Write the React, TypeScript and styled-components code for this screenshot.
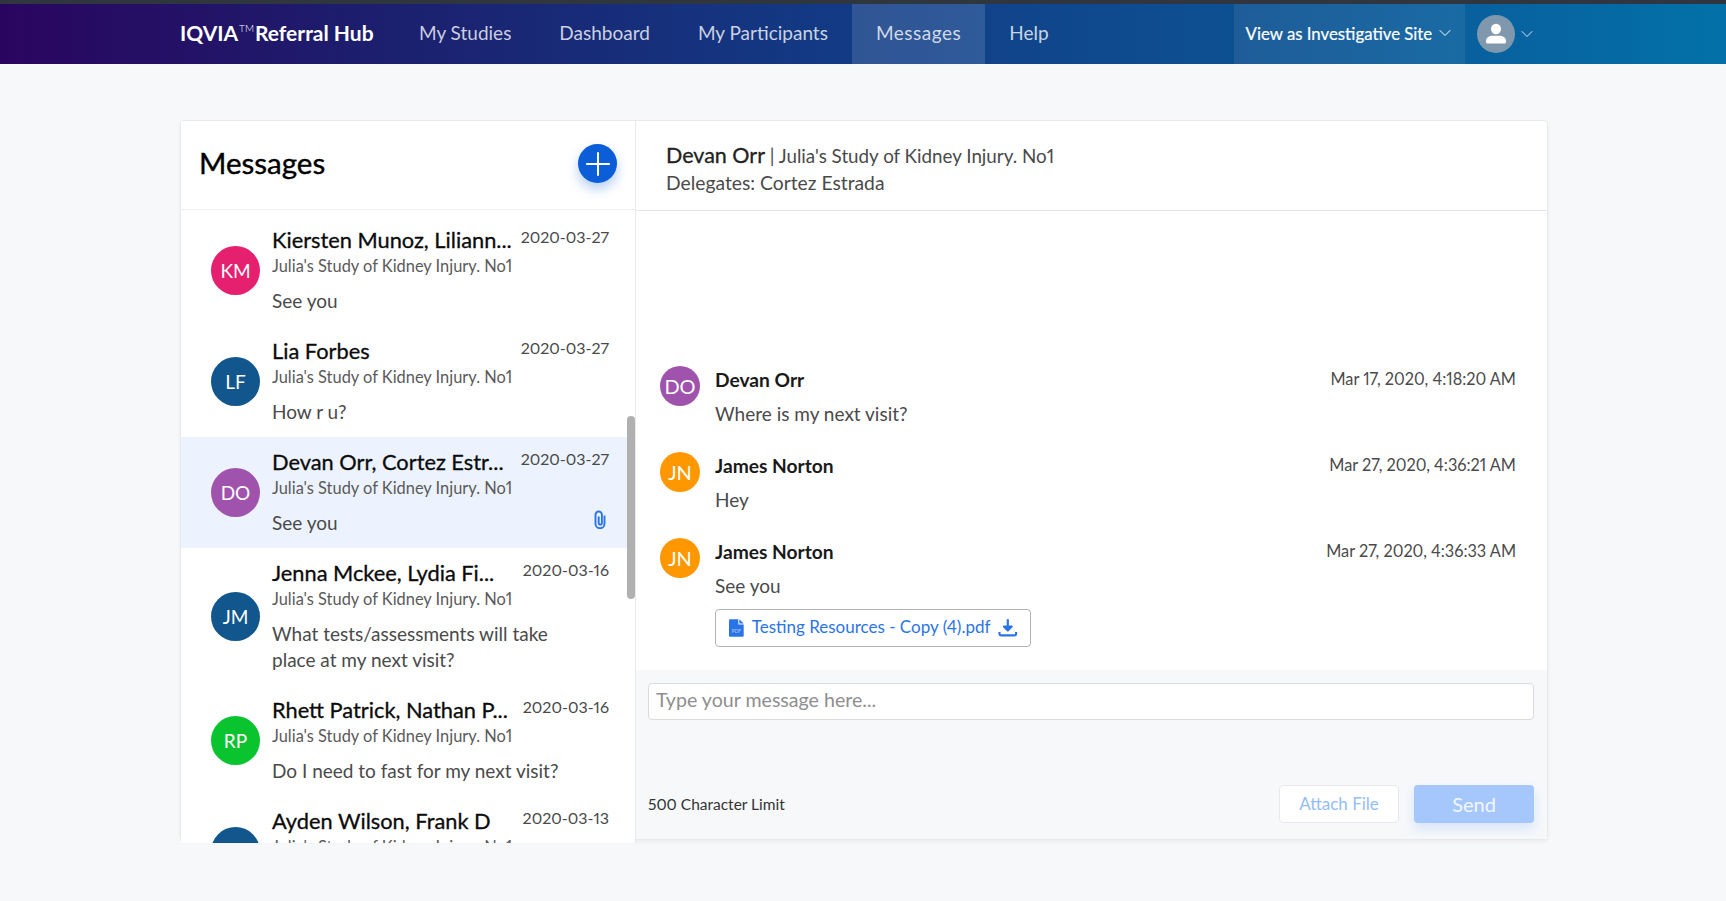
import React from 'react'
import styled, { createGlobalStyle } from 'styled-components'
import { ChevronDown, Plus } from 'lucide-react'

const Global = createGlobalStyle`
	html, body {
		margin: 0;
		height: 901px;
		overflow: hidden;
		background: #f7f8fa;
		font-family: 'Lato', 'Liberation Sans', sans-serif;
		font-variant-numeric: proportional-nums;
		color: #4a4a4a;
	}
	* { box-sizing: border-box; }
`

const TopStrip = styled.div`
	height: 4px;
	background: #2f3640;
`

const Header = styled.header`
	display: flex;
	align-items: stretch;
	height: 60px;
	padding-left: 180px;
	background: linear-gradient(90deg, #2a0560 0%, #1c1f6e 22%, #123c86 50%, #0d5192 72%, #0371a9 100%);
`

const Brand = styled.div`
	display: flex;
	align-items: center;
	width: 215px;
	padding-bottom: 3px;
	color: #fff;
	font-size: 21px;
	font-weight: 700;
	white-space: nowrap;

	sup {
		font-size: 10px;
		font-weight: 300;
		margin: -9px 1px 0 1px;
		line-height: 1;
	}
`

const NavItem = styled.a<{ $active?: boolean }>`
	display: flex;
	align-items: center;
	padding: 0 24px 4px;
	color: rgba(255, 255, 255, 0.78);
	font-size: 19px;
	letter-spacing: ${p => (p.$active ? '0.5px' : '0')};
	background: ${p => (p.$active ? 'rgba(255,255,255,0.13)' : 'transparent')};
`

const ViewAs = styled.div`
	display: flex;
	align-items: center;
	gap: 3px;
	margin-left: 161px;
	width: 231px;
	padding: 0 0 2px 12px;
	color: #fff;
	font-size: 16.8px;
	white-space: nowrap;
	background: rgba(255, 255, 255, 0.07);
	-webkit-text-stroke: 0.2px currentColor;
`

const UserBox = styled.div`
	display: flex;
	align-items: center;
	gap: 2px;
	padding-left: 12px;
	color: rgba(255, 255, 255, 0.85);
`

const UserPic = styled.div`
	display: flex;
	align-items: center;
	justify-content: center;
	width: 38px;
	height: 38px;
	border-radius: 50%;
	background: #8098ae;
`

const Card = styled.main`
	display: flex;
	align-items: flex-start;
	width: 1368px;
	height: 720px;
	margin: 56px 0 0 180px;
	background: #fff;
	border: 1px solid #e8e9ec;
	border-radius: 4px;
	box-shadow: 0 2px 4px rgba(0, 0, 0, 0.05);
`

const Left = styled.section`
	position: relative;
	display: flex;
	flex-direction: column;
	flex: 0 0 455px;
	height: 722px;
	background: #fff;
	border-right: 1px solid #e8e9ec;
	overflow: hidden;
`

const LeftHead = styled.div`
	display: flex;
	align-items: center;
	justify-content: space-between;
	flex: 0 0 auto;
	height: 89px;
	padding: 0 18px 3px 18px;
	border-bottom: 1px solid #eceef0;
`

const Title = styled.h1`
	margin: 0 0 2px;
	color: #000;
	font-size: 29.5px;
	font-weight: 400;
	-webkit-text-stroke: 0.4px currentColor;
`

const AddButton = styled.div`
	display: flex;
	align-items: center;
	justify-content: center;
	width: 39px;
	height: 39px;
	border-radius: 50%;
	color: #fff;
	background: #0b5ed7;
	box-shadow: 0 6px 12px rgba(11, 94, 215, 0.3);
`

const List = styled.div`
	flex: 1;
	padding-top: 5px;
	overflow: hidden;
`

const ScrollThumb = styled.div`
	position: absolute;
	top: 295px;
	right: 0;
	width: 8px;
	height: 183px;
	border-radius: 4px;
	background: #b0b0b0;
`

const Item = styled.div<{ $active?: boolean }>`
	display: flex;
	align-items: center;
	gap: 12px;
	padding: 0 26px 0 30px;
	background: ${p => (p.$active ? '#ecf3fe' : 'transparent')};
`

const Avatar = styled.div<{ $bg: string; $size?: number }>`
	display: flex;
	align-items: center;
	justify-content: center;
	flex: 0 0 auto;
	width: ${p => p.$size ?? 49}px;
	height: ${p => p.$size ?? 49}px;
	border-radius: 50%;
	color: #fff;
	font-size: ${p => (p.$size ? 20 : 19)}px;
	background: ${p => p.$bg};
`

const ItemBody = styled.div`
	flex: 1;
	min-width: 0;
	padding: 11px 0 12px;
`

const ItemTop = styled.div`
	display: flex;
	justify-content: space-between;
	align-items: flex-start;
	height: 28px;
`

const Name = styled.div`
	color: #0b0b0b;
	font-size: 21.8px;
	line-height: 28px;
	white-space: nowrap;
	-webkit-text-stroke: 0.3px currentColor;
`

const ItemDate = styled.div`
	margin-top: -1px;
	color: #4a4a4a;
	font-size: 16px;
	line-height: 24px;
	white-space: nowrap;
`

const Study = styled.div`
	margin-top: 1px;
	color: #5a5a5a;
	font-size: 16.4px;
	line-height: 22px;
`

const ItemFoot = styled.div`
	display: flex;
	justify-content: space-between;
	align-items: flex-start;
	min-height: 26px;
	margin-top: 11px;
	padding-right: 3px;
	color: #4a4a4a;
	font-size: 19px;
	line-height: 26px;

	span {
		max-width: 300px;
	}
`

const Right = styled.section`
	display: flex;
	flex-direction: column;
	flex: 1;
	align-self: stretch;
	min-width: 0;
`

const RightHead = styled.div`
	height: 90px;
	padding: 21px 30px 0;
	border-bottom: 1px solid #e5e6e8;
`

const HeadLine = styled.div`
	color: #4a4a4a;
	font-size: 18.8px;
	line-height: 27px;

	strong {
		color: #222;
		font-size: 21.5px;
		font-weight: 400;
		-webkit-text-stroke: 0.3px currentColor;
	}
`

const Delegates = styled(HeadLine)`
	font-size: 19.3px;
`

const Thread = styled.div`
	flex: 1;
	display: flex;
	flex-direction: column;
	justify-content: flex-end;
	padding: 0 31px 23px 24px;
`

const Row = styled.div`
	display: flex;
	gap: 15px;
	padding-bottom: 22px;

	&:last-child {
		padding-bottom: 0;
	}
`

const RowBody = styled.div`
	flex: 1;
	min-width: 0;
`

const RowTop = styled.div`
	display: flex;
	justify-content: space-between;
	align-items: flex-start;
	height: 32px;
`

const Sender = styled.div`
	color: #1a1a1a;
	font-size: 19.2px;
	font-weight: 700;
	line-height: 27px;
`

const Stamp = styled.div`
	color: #4a4a4a;
	font-size: 16.3px;
	line-height: 25px;
`

const Text = styled.div`
	color: #4a4a4a;
	font-size: 19px;
	line-height: 32px;
`

const FileChip = styled.div`
	display: flex;
	align-items: center;
	gap: 8px;
	width: 316px;
	height: 38px;
	margin-top: 7px;
	padding: 0 12px 0 13px;
	color: #2b74e8;
	font-size: 17px;
	border: 1px solid #b0b2b5;
	border-radius: 4px;
	white-space: nowrap;

	span {
		flex: 1;
		padding-bottom: 3px;
	}
`

const Compose = styled.div`
	display: flex;
	flex-direction: column;
	flex: 0 0 auto;
	height: 169px;
	padding: 13px 13px 16px 12px;
	background: #f7f8fa;
`

const Field = styled.div`
	height: 37px;
	padding: 0 7px;
	color: #8e8e8e;
	font-size: 19.6px;
	line-height: 32px;
	background: #fff;
	border: 1px solid #d9dbde;
	border-radius: 4px;
`

const ComposeFoot = styled.div`
	display: flex;
	align-items: center;
	gap: 15px;
	margin-top: auto;
`

const Limit = styled.div`
	flex: 1;
	color: #333;
	font-size: 15.5px;
`

const Btn = styled.div<{ $primary?: boolean }>`
	display: flex;
	align-items: center;
	justify-content: center;
	width: 120px;
	height: 38px;
	padding-bottom: 1px;
	border-radius: 4px;
	font-size: ${p => (p.$primary ? 20 : 17)}px;
	color: ${p => (p.$primary ? '#f3f7ff' : '#94bcfb')};
	background: ${p => (p.$primary ? '#a6c7fb' : '#fff')};
	border: ${p => (p.$primary ? 'none' : '1px solid #e7e9ec')};
	box-shadow: ${p => (p.$primary ? '0 6px 12px rgba(166,199,251,0.4)' : 'none')};
`

const items = [
	{ i: 'KM', bg: '#e4206f', name: 'Kiersten Munoz, Liliann...', date: '2020-03-27', text: 'See you' },
	{ i: 'LF', bg: '#11568c', name: 'Lia Forbes', date: '2020-03-27', text: 'How r u?' },
	{ i: 'DO', bg: '#a053ac', name: 'Devan Orr, Cortez Estr...', date: '2020-03-27', text: 'See you', active: true, clip: true },
	{ i: 'JM', bg: '#11568c', name: 'Jenna Mckee, Lydia Fi...', date: '2020-03-16', text: 'What tests/assessments will take place at my next visit?' },
	{ i: 'RP', bg: '#0ac42f', name: 'Rhett Patrick, Nathan P...', date: '2020-03-16', text: 'Do I need to fast for my next visit?' },
	{ i: '', bg: '#11568c', name: 'Ayden Wilson, Frank D', date: '2020-03-13', text: '' },
]

const thread = [
	{ i: 'DO', bg: '#a053ac', name: 'Devan Orr', time: 'Mar 17, 2020, 4:18:20 AM', text: 'Where is my next visit?' },
	{ i: 'JN', bg: '#ff9800', name: 'James Norton', time: 'Mar 27, 2020, 4:36:21 AM', text: 'Hey' },
	{ i: 'JN', bg: '#ff9800', name: 'James Norton', time: 'Mar 27, 2020, 4:36:33 AM', text: 'See you', file: true },
]

const UserIcon = () => (
	<svg width="24" height="24" viewBox="0 0 24 24" fill="#fff">
		<ellipse cx="12" cy="7" rx="5" ry="5.300" />
		<path d="M2 20v-1.500c0-2.800 4-4.700 6-4.700h8c2 0 6 1.900 6 4.700V20a1.500 1.500 0 0 1-1.500 1.500h-17A1.500 1.500 0 0 1 2 20z" />
	</svg>
)

const ClipIcon = () => (
	<svg width="12" height="19" viewBox="0 0 12 18" fill="none" stroke="#2b74e8" strokeWidth="1.900">
		<path d="M10.500 5v8.200a4.500 4.500 0 0 1-9 0V4.200a3.200 3.200 0 0 1 6.400 0v8.300a1.600 1.600 0 0 1-3.200 0V6" />
	</svg>
)

const PdfIcon = () => (
	<svg width="15" height="18" viewBox="0 0 15 18">
		<path d="M1 0h8.500v5.500H15V17a1 1 0 0 1-1 1H1a1 1 0 0 1-1-1V1a1 1 0 0 1 1-1z" fill="#2b74e8" />
		<path d="M10.500 0L15 4.500h-4.500z" fill="#2b74e8" />
		<text x="7.500" y="14" fontSize="4.800" textAnchor="middle" fill="#b5d0fb">
			PDF
		</text>
	</svg>
)

const DownloadIcon = () => (
	<svg width="20" height="20" viewBox="0 0 20 20" fill="none" stroke="#2b74e8" strokeWidth="2.200">
		<path d="M10 1v10" />
		<path d="M6 8.500L10 12.500l4-4z" fill="#2b74e8" strokeLinejoin="round" />
		<path d="M1.500 14v1.500a2 2 0 0 0 2 2h13a2 2 0 0 0 2-2V14" />
	</svg>
)

export default function App() {
	return (
		<>
			<Global />
			<TopStrip />
			<Header>
				<Brand>
					IQVIA<sup>TM</sup>Referral Hub
				</Brand>
				<NavItem>My Studies</NavItem>
				<NavItem>Dashboard</NavItem>
				<NavItem>My Participants</NavItem>
				<NavItem $active>Messages</NavItem>
				<NavItem>Help</NavItem>
				<ViewAs>
					View as Investigative Site
					<ChevronDown size={20} strokeWidth={1.2} />
				</ViewAs>
				<UserBox>
					<UserPic>
						<UserIcon />
					</UserPic>
					<ChevronDown size={20} strokeWidth={1.2} />
				</UserBox>
			</Header>
			<Card>
				<Left>
					<LeftHead>
						<Title>Messages</Title>
						<AddButton>
							<Plus size={38} strokeWidth={1.3} />
						</AddButton>
					</LeftHead>
					<List>
						{items.map(it => (
							<Item key={it.name} $active={it.active}>
								<Avatar $bg={it.bg}>{it.i}</Avatar>
								<ItemBody>
									<ItemTop>
										<Name>{it.name}</Name>
										<ItemDate>{it.date}</ItemDate>
									</ItemTop>
									<Study>Julia's Study of Kidney Injury. No1</Study>
									<ItemFoot>
										<span>{it.text}</span>
										{it.clip && <ClipIcon />}
									</ItemFoot>
								</ItemBody>
							</Item>
						))}
					</List>
					<ScrollThumb />
				</Left>
				<Right>
					<RightHead>
						<HeadLine>
							<strong>Devan Orr</strong> | Julia's Study of Kidney Injury. No1
						</HeadLine>
						<Delegates>Delegates: Cortez Estrada</Delegates>
					</RightHead>
					<Thread>
						{thread.map(m => (
							<Row key={m.time}>
								<Avatar $bg={m.bg} $size={40}>
									{m.i}
								</Avatar>
								<RowBody>
									<RowTop>
										<Sender>{m.name}</Sender>
										<Stamp>{m.time}</Stamp>
									</RowTop>
									<Text>{m.text}</Text>
									{m.file && (
										<FileChip>
											<PdfIcon />
											<span>Testing Resources - Copy (4).pdf</span>
											<DownloadIcon />
										</FileChip>
									)}
								</RowBody>
							</Row>
						))}
					</Thread>
					<Compose>
						<Field>Type your message here...</Field>
						<ComposeFoot>
							<Limit>500 Character Limit</Limit>
							<Btn>Attach File</Btn>
							<Btn $primary>Send</Btn>
						</ComposeFoot>
					</Compose>
				</Right>
			</Card>
		</>
	)
}
